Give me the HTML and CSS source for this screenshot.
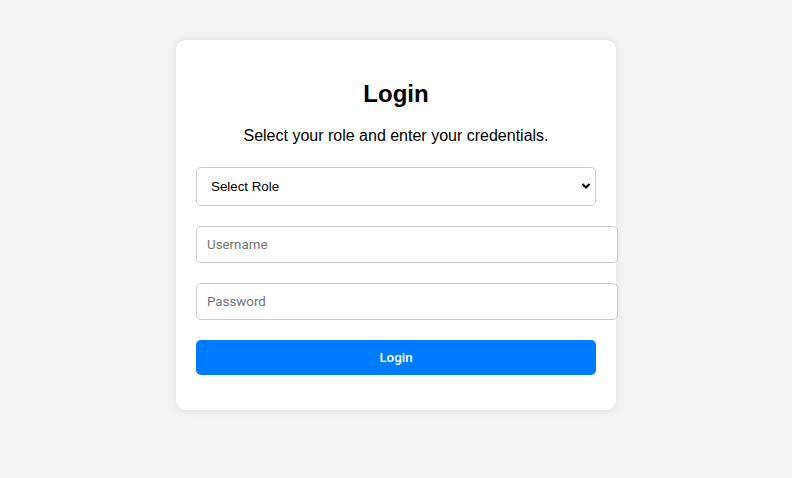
FILE: index.html
```html
<!DOCTYPE html>
<html>
<head>
<meta charset="utf-8">
<link rel="stylesheet" href="styles.css">
</head>
<body>
<div class="card">
  <h2 class="title">Login</h2>
  <p class="subtitle">Select your role and enter your credentials.</p>
  <form class="form">
    <div class="select-wrap">
      <select class="select">
        <option>Select Role</option>
        <option>Admin</option>
        <option>User</option>
      </select>
      <svg class="chevron" width="10" height="8" viewBox="0 0 10 8"><path d="M1.5 2 L5 5.5 L8.5 2" fill="none" stroke="#000" stroke-width="2"/></svg>
    </div>
    <input class="field" type="text" placeholder="Username">
    <input class="field" type="password" placeholder="Password">
    <button class="btn" type="button">Login</button>
  </form>
</div>
</body>
</html>
```
FILE: styles.css
```css
html, body {
  margin: 0;
  padding: 0;
}
body {
  background: #f4f4f4;
  font-family: "Liberation Sans", Arial, sans-serif;
  padding-top: 40px;
  height: 438px;
}
.card {
  width: 400px;
  margin: 0 auto;
  padding: 20px 20px 35px;
  background: #fff;
  border-radius: 10px;
  box-shadow: 0 0 10px rgba(0, 0, 0, 0.1);
  text-align: center;
}
.title {
  margin: 20px 0 19px;
  font-size: 24px;
  line-height: 28px;
  font-weight: bold;
  color: #000;
}
.subtitle {
  margin: 0;
  font-size: 16px;
  line-height: 18px;
  color: #000;
}
.form {
  display: flex;
  flex-direction: column;
  align-items: flex-start;
  margin-top: 22px;
}
.select-wrap {
  position: relative;
  width: 400px;
}
.select {
  display: block;
  width: 400px;
  height: 39px;
  box-sizing: border-box;
  padding: 0 30px 0 14px;
  border: 1px solid #ccc;
  border-radius: 5px;
  background: #fff;
  font-family: "Liberation Sans", Arial, sans-serif;
  font-size: 13.33px;
  color: #000;
  -webkit-appearance: none;
  appearance: none;
}
.chevron {
  position: absolute;
  right: 5px;
  top: 15px;
}
.field {
  display: block;
  width: 400px;
  box-sizing: content-box;
  height: 15px;
  margin-top: 20px;
  padding: 10px;
  border: 1px solid #ccc;
  border-radius: 5px;
  font-family: Roboto, sans-serif;
  font-size: 13.33px;
  color: #000;
  background: #fff;
}
.field::placeholder {
  color: #757575;
}
.btn {
  display: block;
  width: 400px;
  height: 35px;
  margin-top: 20px;
  padding: 0;
  border: none;
  border-radius: 5px;
  background: #007bff;
  color: #fff;
  font-family: Roboto, sans-serif;
  font-size: 13.33px;
  font-weight: 500;
}
```
